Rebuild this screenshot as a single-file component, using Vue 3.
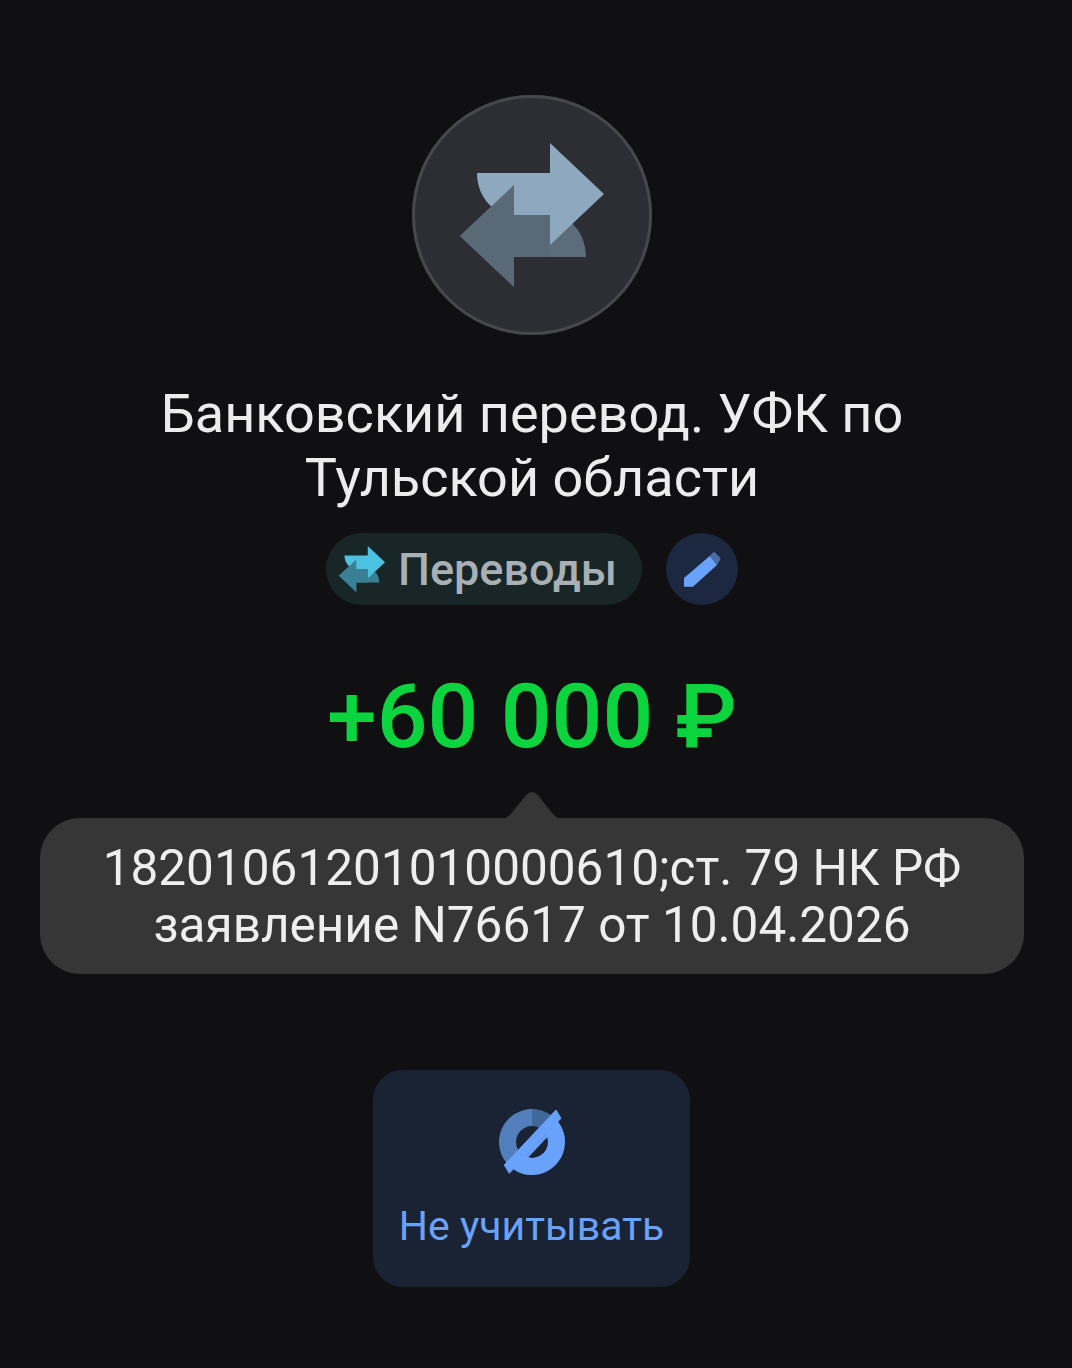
<template>
  <div class="screen">
    <div class="avatar">
      <svg class="avatar-icon" viewBox="0 0 240 240" width="240" height="240">
        <path :d="DARK_ARROW" fill="#5c6c7a" />
        <path :d="LIGHT_ARROW" fill="#8ea9bf" />
        <path :d="DARK_HEAD" fill="#5a6976" />
      </svg>
    </div>

    <h1 class="title">Банковский перевод. УФК по<br />Тульской области</h1>

    <div class="tags">
      <div class="category">
        <svg viewBox="48 48 144 144" width="46" height="46">
          <path :d="DARK_ARROW" fill="#3a8094" />
          <path :d="LIGHT_ARROW" fill="#4cc2e0" />
          <path :d="DARK_HEAD" fill="#3a8094" />
        </svg>
        <span>Переводы</span>
      </div>
      <button class="edit">
        <svg viewBox="0 0 72 72" width="72" height="72">
          <path d="M18 45 L44 22.700 L51 32 L27 53.700 L18 53.700 Z" fill="#68a2fa" />
          <path d="M44 22.700 L47 19.500 Q48 18.500 49 19.500 L54 24.500 Q55 25.500 54 27 L51 32 Z" fill="#4a6da8" />
        </svg>
      </button>
    </div>

    <div class="amount">+60 000 ₽</div>

    <div class="tooltip">
      <svg class="tooltip-arrow" viewBox="0 0 64 30" width="64" height="30">
        <path d="M0 30 Q6 29 11 24 L26 5 Q32 -1 38 5 L52 23 Q57 29 64 30 Z" fill="#363636" />
      </svg>
      18201061201010000610;ст. 79 НК РФ<br />заявление N76617 от 10.04.2026
    </div>

    <button class="action">
      <svg viewBox="0 0 80 80" width="80" height="80">
        <defs>
          <clipPath id="ring-left"><path d="M40 0 V80 H-5 V0 Z" /></clipPath>
          <clipPath id="ring-top"><path d="M40 0 H80 V40 H40 Z" /></clipPath>
          <clipPath id="ring-below"><path d="M14.800 67 L66.500 12 L90 12 L90 90 L14.800 90 Z" /></clipPath>
        </defs>
        <path :d="RING" fill="#527fbb" fill-rule="evenodd" clip-path="url(#ring-left)" />
        <path :d="RING" fill="#41689b" fill-rule="evenodd" clip-path="url(#ring-top)" />
        <path :d="RING" fill="#68a2fa" fill-rule="evenodd" clip-path="url(#ring-below)" />
        <path d="M12.300 63 L64 8 L69 16.300 L17.300 71.300 Z" fill="#68a2fa" stroke="#68a2fa" stroke-width="1" stroke-linejoin="round" />
        <path d="M28 60 L60 26 L62 28 L30 62 Z" fill="#68a2fa" />
      </svg>
      <span>Не учитывать</span>
    </button>
  </div>
</template>

<script setup>
const LIGHT_ARROW = 'M65 78 H138 V48 L192 99 L138 150 V120 H102 C80 120 65 100 65 78 Z'
const DARK_ARROW = 'M174 162 H102 V192 L48 141 L102 90 V120 H138 C160 120 174 140 174 162 Z'
const DARK_HEAD = 'M102 90 L48 141 L102 192 V162 H138 V120 H102 Z'
const RING = 'M40 7 A33 33 0 1 1 39.990 7 Z M40 24 A16 16 0 1 0 40.010 24 Z'
</script>

<style scoped>
.screen {
  width: 1072px;
  height: 1368px;
  background: #101012;
  padding: 95px 8px 0 0;
  box-sizing: border-box;
  display: flex;
  flex-direction: column;
  align-items: center;
  font-family: Roboto, "Noto Sans", sans-serif;
  overflow: hidden;
}

.avatar {
  width: 240px;
  height: 240px;
  border-radius: 50%;
  background: #2d2e33;
  box-shadow: inset 0 0 0 3px #47484c;
  flex: none;
}
.avatar-icon { display: block; }

.title {
  margin: 47px 0 0;
  font-size: 54px;
  line-height: 64px;
  font-weight: 400;
  color: #ececec;
  text-align: center;
}

.tags {
  display: flex;
  align-items: center;
  gap: 24px;
  margin-top: 23px;
}
.category {
  height: 72px;
  width: 316px;
  box-sizing: border-box;
  padding-left: 13px;
  border-radius: 36px;
  background: #192628;
  display: flex;
  align-items: center;
  gap: 13px;
  font-size: 45px;
  font-weight: 500;
  color: #a9b0b5;
}
.edit {
  width: 72px;
  height: 72px;
  padding: 0;
  border: none;
  border-radius: 50%;
  background: #1c2740;
}
.edit svg { display: block; }

.amount {
  margin-top: 67px;
  font-size: 89.500px;
  line-height: 90px;
  font-weight: 500;
  color: #0bd43f;
}

.tooltip {
  position: relative;
  margin-top: 56px;
  width: 984px;
  height: 156px;
  box-sizing: border-box;
  padding-top: 22px;
  border-radius: 40px;
  background: #363636;
  color: #eeeeee;
  font-size: 49.500px;
  line-height: 57px;
  text-align: center;
}
.tooltip-arrow {
  position: absolute;
  left: 460px;
  top: -28px;
}

.action {
  margin: 96px 1px 0 0;
  width: 317px;
  height: 217px;
  border: none;
  border-radius: 30px;
  background: #1a2333;
  display: flex;
  flex-direction: column;
  align-items: center;
  padding: 32px 0 0;
  font-family: inherit;
  font-size: 41px;
  color: #68a2fa;
}
.action span { margin-top: 20px; }
</style>
